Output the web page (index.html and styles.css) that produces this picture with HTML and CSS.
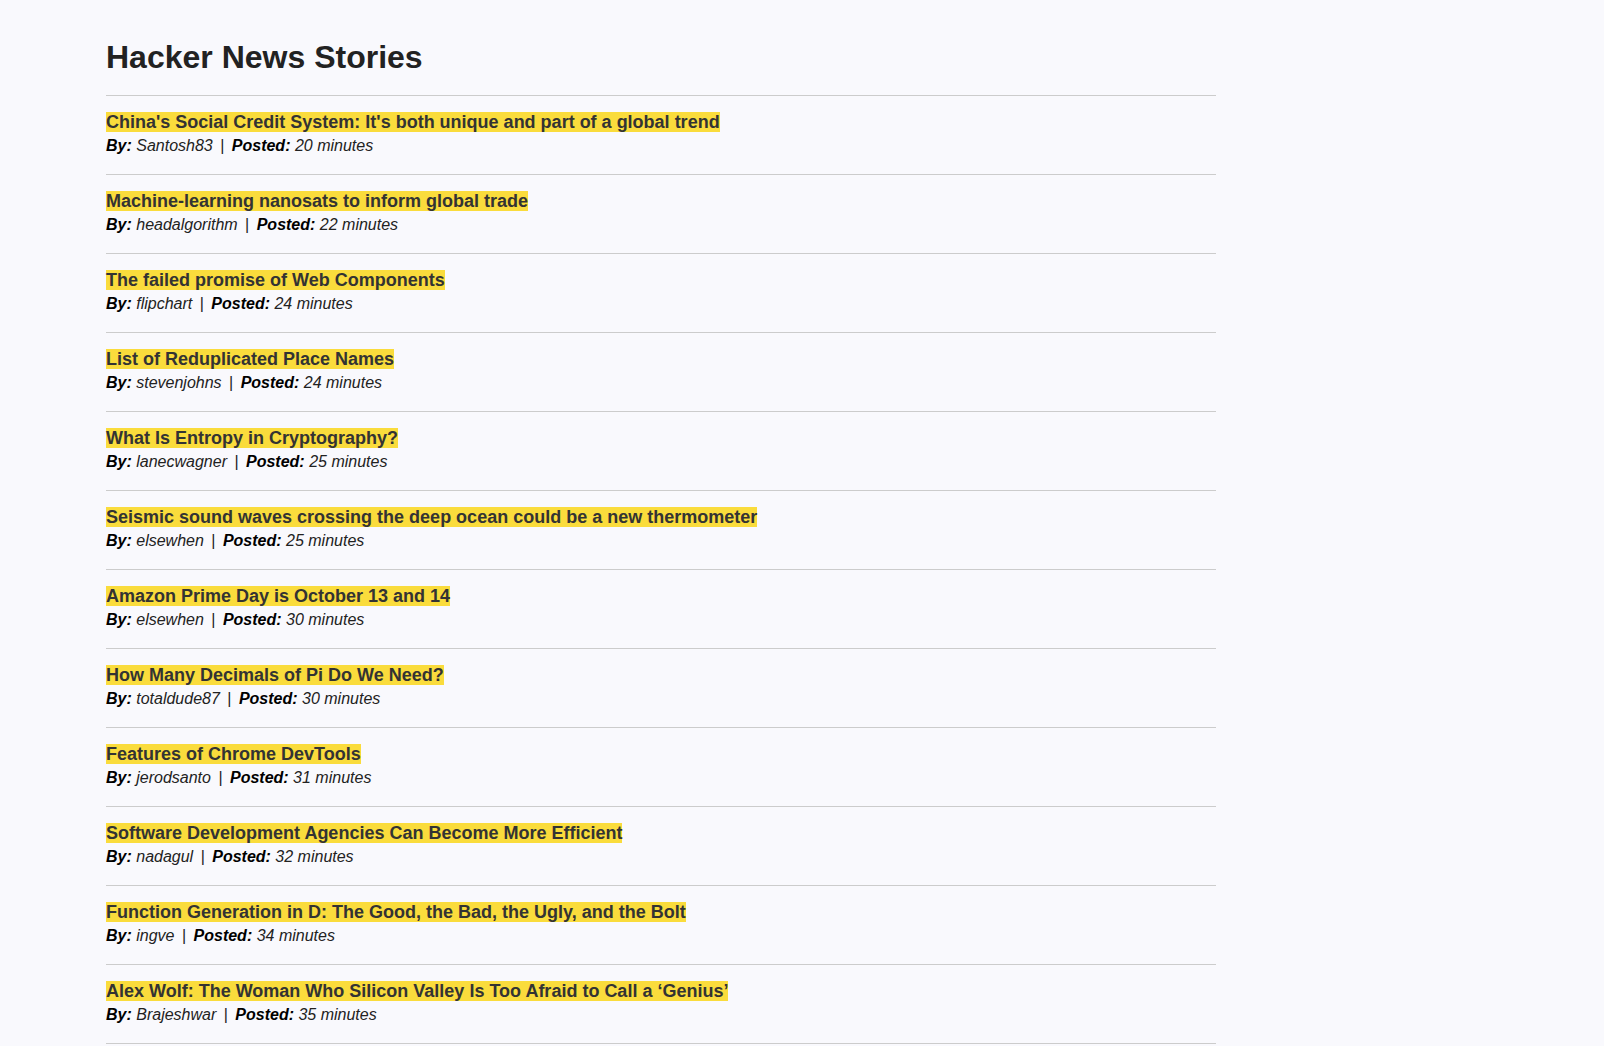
FILE: index.html
```html
<!DOCTYPE html>
<html lang="en">
<head>
<meta charset="utf-8">
<title>Hacker News Stories</title>
<link rel="stylesheet" href="styles.css">
</head>
<body>
<main class="page">
  <h1 class="page-title">Hacker News Stories</h1>
  <ul class="stories">
    <li class="story"><a class="story-title" href="#">China's Social Credit System: It's both unique and part of a global trend</a><div class="meta"><b>By:</b> Santosh83 <span class="sep">|</span> <b>Posted:</b> 20 minutes</div></li>
    <li class="story"><a class="story-title" href="#">Machine-learning nanosats to inform global trade</a><div class="meta"><b>By:</b> headalgorithm <span class="sep">|</span> <b>Posted:</b> 22 minutes</div></li>
    <li class="story"><a class="story-title" href="#">The failed promise of Web Components</a><div class="meta"><b>By:</b> flipchart <span class="sep">|</span> <b>Posted:</b> 24 minutes</div></li>
    <li class="story"><a class="story-title" href="#">List of Reduplicated Place Names</a><div class="meta"><b>By:</b> stevenjohns <span class="sep">|</span> <b>Posted:</b> 24 minutes</div></li>
    <li class="story"><a class="story-title" href="#">What Is Entropy in Cryptography?</a><div class="meta"><b>By:</b> lanecwagner <span class="sep">|</span> <b>Posted:</b> 25 minutes</div></li>
    <li class="story"><a class="story-title" href="#">Seismic sound waves crossing the deep ocean could be a new thermometer</a><div class="meta"><b>By:</b> elsewhen <span class="sep">|</span> <b>Posted:</b> 25 minutes</div></li>
    <li class="story"><a class="story-title" href="#">Amazon Prime Day is October 13 and 14</a><div class="meta"><b>By:</b> elsewhen <span class="sep">|</span> <b>Posted:</b> 30 minutes</div></li>
    <li class="story"><a class="story-title" href="#">How Many Decimals of Pi Do We Need?</a><div class="meta"><b>By:</b> totaldude87 <span class="sep">|</span> <b>Posted:</b> 30 minutes</div></li>
    <li class="story"><a class="story-title" href="#">Features of Chrome DevTools</a><div class="meta"><b>By:</b> jerodsanto <span class="sep">|</span> <b>Posted:</b> 31 minutes</div></li>
    <li class="story"><a class="story-title" href="#">Software Development Agencies Can Become More Efficient</a><div class="meta"><b>By:</b> nadagul <span class="sep">|</span> <b>Posted:</b> 32 minutes</div></li>
    <li class="story"><a class="story-title" href="#">Function Generation in D: The Good, the Bad, the Ugly, and the Bolt</a><div class="meta"><b>By:</b> ingve <span class="sep">|</span> <b>Posted:</b> 34 minutes</div></li>
    <li class="story"><a class="story-title" href="#">Alex Wolf: The Woman Who Silicon Valley Is Too Afraid to Call a ‘Genius’</a><div class="meta"><b>By:</b> Brajeshwar <span class="sep">|</span> <b>Posted:</b> 35 minutes</div></li>
  </ul>
</main>
</body>
</html>
```
FILE: styles.css
```css
html, body {
  margin: 0;
  padding: 0;
  background: #f9f9fd;
}
body {
  font-family: "Liberation Sans", Arial, sans-serif;
  color: #222;
}
.page {
  width: 1110px;
  padding: 39px 0 0 106px;
}
.page-title {
  margin: 0;
  font-size: 32px;
  font-weight: bold;
  line-height: 37px;
  color: #222;
  padding-bottom: 19px;
  border-bottom: 1px solid #ccc;
}
.stories {
  list-style: none;
  margin: 0;
  padding: 0;
}
.story {
  padding: 16px 0 19px;
  border-bottom: 1px solid #ccc;
}
.story-title {
  font-size: 18px;
  font-weight: bold;
  color: #333;
  text-decoration: none;
  background: #fadc3c;
}
.meta {
  margin-top: 4px;
  font-size: 16px;
  font-style: italic;
  color: #222;
}
.meta b {
  color: #000;
}
.sep {
  font-style: normal;
  margin: 0 3px;
}
```
